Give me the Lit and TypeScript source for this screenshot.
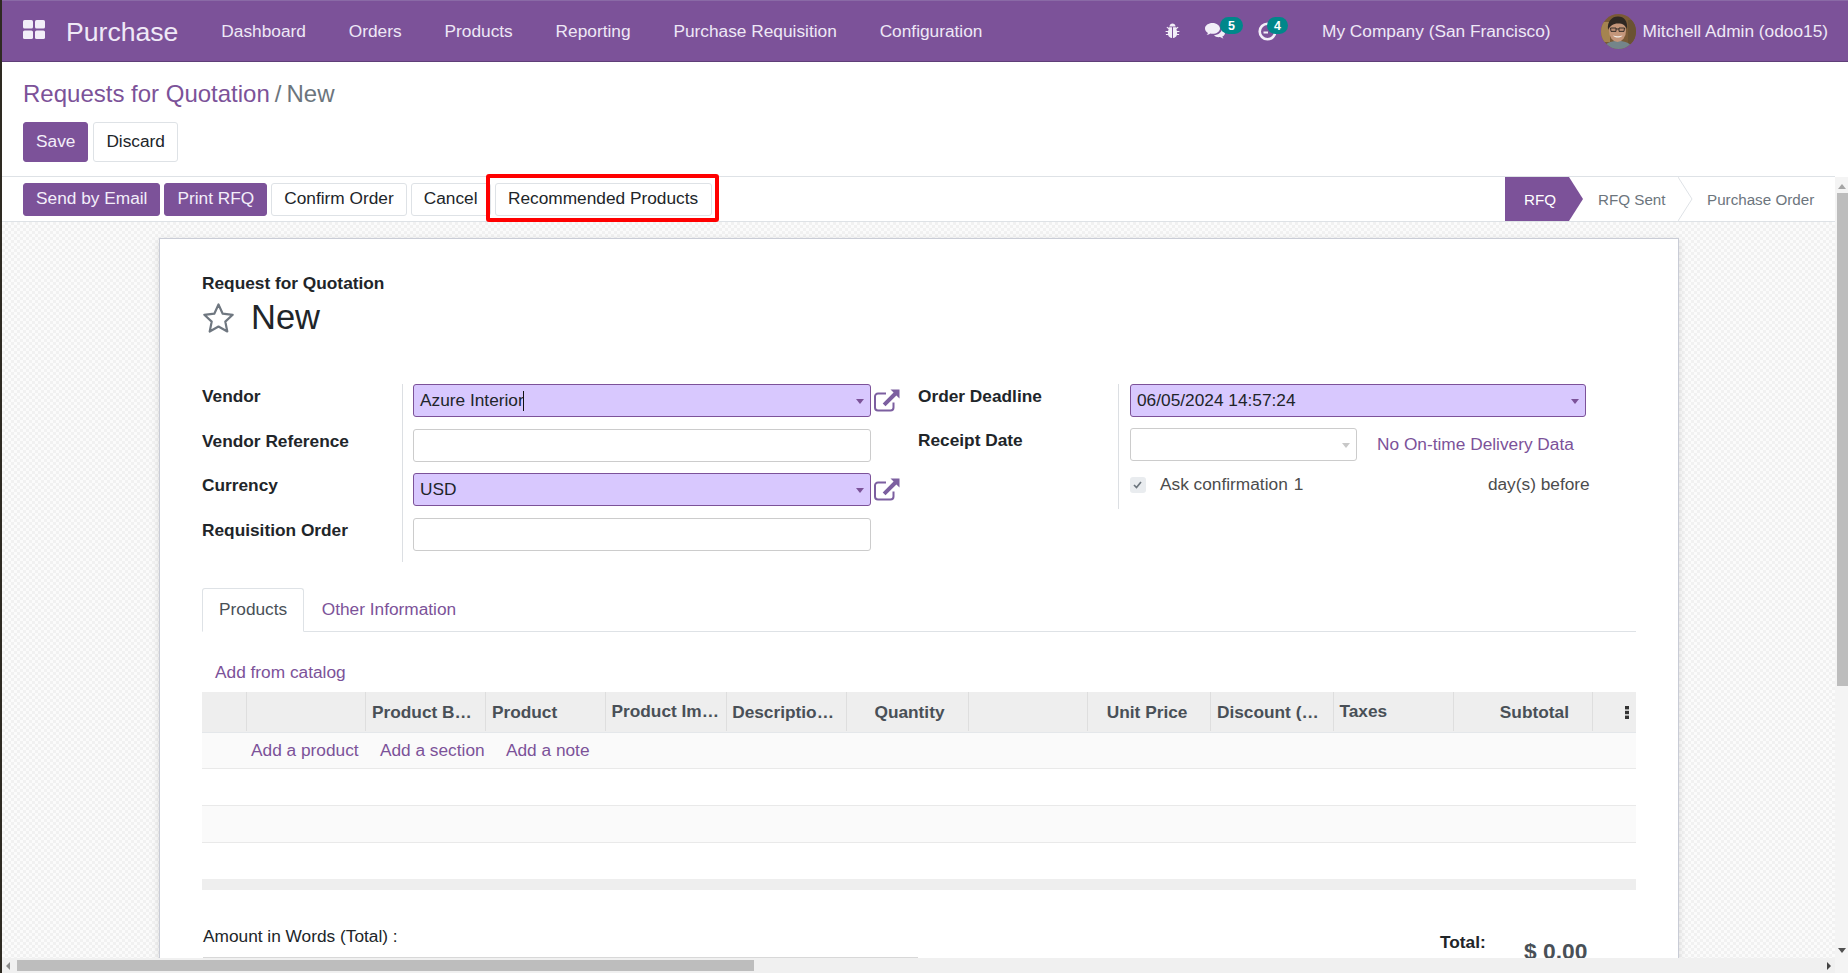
import { LitElement, html, css, svg } from "lit";
import { customElement } from "lit/decorators.js";

const columns = [
  { w: 44.6, t: "" },
  { w: 119.9, t: "" },
  { w: 119.9, t: "Product B…" },
  { w: 119.6, t: "Product" },
  { w: 120.7, t: "Product Im…", hi: true },
  { w: 119.9, t: "Descriptio…" },
  { w: 122, t: "Quantity", right: true },
  { w: 119.9, t: "" },
  { w: 123, t: "Unit Price", right: true },
  { w: 122.5, t: "Discount (…" },
  { w: 120.5, t: "Taxes", hi: true },
  { w: 138.5, t: "Subtotal", right: true },
  { w: 42, t: "", dots: true },
];

const caret = (cls: string) => html`<span class="caret ${cls}"></span>`;
const extLink = svg`<svg class="ext" viewBox="0 0 26 23" width="26" height="23"><path d="M19.5 13.5v5a3 3 0 0 1-3 3H4a3 3 0 0 1-3-3V7.5a3 3 0 0 1 3-3h8" fill="none" stroke="#7c5fa0" stroke-width="2"/><path d="M16.5 0.5H25.5V9.5L22.4 6.4 11.5 17.3 8.7 14.5 19.6 3.6Z" fill="#7c5fa0"/></svg>`;

@customElement("app-root")
export class AppRoot extends LitElement {
  static styles = css`
    :host {
      display: flex;
      flex-direction: column;
      width: 1848px;
      height: 973px;
      overflow: hidden;
      box-sizing: border-box;
      border-left: 2px solid #2e2a22;
      background: #fff;
      font-family: "Liberation Sans", Arial, sans-serif;
      font-size: 17.3px;
      color: #212529;
    }
    * { box-sizing: border-box; }
    a { color: #7c5299; text-decoration: none; }

    .nav {
      flex: none;
      height: 62px;
      background: #7c5299;
      border-top: 1px solid #8a6aa6;
      border-bottom: 1px solid #5f3f78;
      display: flex;
      align-items: center;
      color: #eee8f6;
      padding: 0 20px 0 21px;
    }
    .apps { flex: none; display: block; margin: 0 21px 3px 0; }
    .brand { font-size: 26.6px; margin-right: 43px; color: #efe9f7; padding-top: 2px; }
    .menu { display: flex; gap: 42.9px; }
    .spacer { flex: 1; }
    .sys { display: flex; align-items: center; }
    .ico { position: relative; display: block; }
    .bug { margin-right: 25px; }
    .chat { margin-right: 32px; }
    .clock { margin-right: 45px; }
    .badge {
      position: absolute;
      top: -5px;
      left: 15px;
      width: 23px;
      height: 17px;
      border-radius: 9px;
      background: #00878a;
      color: #fff;
      font-size: 12.5px;
      font-weight: 700;
      display: flex;
      align-items: center;
      justify-content: center;
    }
    .clock .badge { left: 9px; width: 21px; top: -4.5px; }
    .company { margin-right: 50px; }
    .avatar { display: block; margin-right: 7px; }

    .panel {
      flex: none;
      height: 114px;
      padding: 0 21px;
      display: flex;
      flex-direction: column;
    }
    .crumbs { height: 60px; display: flex; align-items: center; font-size: 24px; gap: 5px; padding-top: 4px; }
    .crumbs .sep, .crumbs .cur { color: #6c757d; }
    .btns { display: flex; gap: 5px; }
    .btn {
      display: inline-flex;
      align-items: center;
      height: 40px;
      padding: 0 12px 1px;
      border: 1px solid #dee2e6;
      border-radius: 3px;
      background: #fff;
      color: #212529;
      white-space: nowrap;
    }
    .btn.pri { background: #7c5299; border-color: #7c5299; color: #f3eef9; }
    .btn.s { height: 33px; }

    .work { flex: 1; min-height: 0; display: flex; }
    .left { flex: 1; min-width: 0; display: flex; flex-direction: column; }
    .status {
      flex: none;
      height: 46px;
      border-top: 1px solid #dee2e6;
      border-bottom: 1px solid #dee2e6;
      display: flex;
      align-items: center;
      padding-left: 21px;
      gap: 4px;
      background: #fff;
    }
    .status .spacer { flex: 1; }
    .reco { position: relative; }
    .reco .btn { width: 217px; justify-content: center; }
    .mark {
      position: absolute;
      left: -9px;
      right: -7px;
      top: -9px;
      bottom: -6px;
      border: 4.5px solid #ff0000;
      border-radius: 3px;
      pointer-events: none;
    }
    .pipe { display: flex; align-self: stretch; height: 44px; align-items: stretch; }
    .stage {
      display: flex;
      align-items: center;
      position: relative;
      font-size: 15.2px;
      color: #6c757d;
    }
    .stage.on { background: #7c5299; color: #fff; width: 64px; justify-content: flex-start; padding-left: 19px; }
    .stage.a { width: 109px; padding-left: 14px; }
    .stage.b { width: 142px; padding-left: 14px; }
    .chev { flex: none; display: block; }

    .sheet {
      flex: 1;
      min-height: 0;
      overflow: hidden;
      background-color: #f6f6f6;
      background-image: repeating-conic-gradient(#f1f1f1 0 25%, #fbfbfb 0 50%);
      background-size: 6px 6px;
      padding: 16px 156.5px 0 157px;
    }
    .card {
      background: #fff;
      border: 1px solid #c9ccd6;
      box-shadow: 0 2px 8px rgba(0, 0, 0, 0.12);
      padding: 32px 42px 0 42px;
      height: 900px;
    }
    .sub { font-weight: 700; line-height: 24px; }
    .title { display: flex; align-items: center; height: 38px; font-size: 34.5px; gap: 16px; margin-top: 3.5px; }
    .star { display: block; }

    .groups { display: grid; grid-template-columns: 716px 1fr; margin-top: 47.5px; align-items: start; }
    .group { display: grid; }
    .g1 { grid-template-columns: 200px 1fr; }
    .g2 { grid-template-columns: 199.5px 1fr; }
    .labels { display: flex; flex-direction: column; font-weight: 700; }
    .labels > div { height: 33.3px; line-height: 24px; margin-bottom: 11.3px; }
    .g2 .labels > div { margin-bottom: 10.5px; }
    .fields {
      border-left: 1px solid #dcdfe3;
      padding: 0 0 10px 10px;
      display: flex;
      flex-direction: column;
      gap: 11.3px;
    }
    .g2 .fields { padding-left: 11.5px; padding-bottom: 11px; gap: 10.5px; }
    .fr { display: flex; align-items: center; gap: 2.5px; height: 33.3px; }
    .ext { display: block; flex: none; }
    .inp {
      width: 458px;
      height: 33.3px;
      border: 1px solid #ccc;
      border-radius: 3px;
      background: #fff;
      padding: 0 6px;
      display: flex;
      align-items: center;
      position: relative;
    }
    .inp.req { background: #d8c8fe; border-color: #7c5299; }
    .inp.w2 { width: 456px; }
    .inp.w3 { width: 226.5px; }
    .cursor { display: inline-block; width: 1px; height: 20px; background: #111; margin-left: -1px; }
    .caret {
      position: absolute;
      right: 6px;
      top: 14px;
      width: 0;
      height: 0;
      border-left: 4.5px solid transparent;
      border-right: 4.5px solid transparent;
      border-top: 5px solid #7c5299;
    }
    .caret.off { border-top-color: #c8c8c8; }
    .rd { gap: 20.5px; }
    .late { white-space: nowrap; }
    .ask { color: #4c4c4c; justify-content: flex-start; gap: 0; height: 26px; margin-top: 0; }
    .cb {
      width: 15.5px;
      height: 16px;
      border-radius: 3px;
      background: #e9ecef;
      display: flex;
      align-items: center;
      justify-content: center;
      margin-right: 14.5px;
      flex: none;
    }
    .ask .gap { width: 184.5px; }

    .tabs { margin-top: 26px; height: 44px; display: flex; border-bottom: 1px solid #dee2e6; }
    .tab { height: 44px; padding: 0 17.5px 2px; display: flex; align-items: center; }
    .tab.on { border: 1px solid #dee2e6; border-bottom: 1px solid #fff; border-radius: 3px 3px 0 0; color: #495057; background: #fff; padding: 0 16px 2px; }
    .catalog { height: 60px; padding: 28px 0 0 13px; line-height: 24px; display: block; }
    .thead { display: flex; height: 41px; background: #eee; border-bottom: 1.5px solid #e4e7ea; font-weight: 700; color: #495057; }
    .th {
      flex: none;
      height: 39px;
      border-right: 1px solid #dedede;
      display: flex;
      align-items: center;
      padding: 1px 5px 0 5.5px;
      white-space: nowrap;
    }
    .th.right { justify-content: flex-end; padding-right: 23px; }
    .th.hi { padding-top: 0; padding-bottom: 1px; }
    .th.last { border-right: none; justify-content: flex-end; padding-right: 6px; }
    .row { height: 36.7px; border-bottom: 1.5px solid #e9e9e9; }
    .row.odd { background: #fafafa; }
    .adds { display: flex; align-items: center; gap: 21.3px; padding-left: 49px; height: 36px; }
    .tfoot { height: 11px; background: #eee; }
    .bottom { display: flex; margin-top: 32px; }
    .words { width: 715px; margin-left: 1px; border-bottom: 1.5px solid #d8d8d8; height: 36px; line-height: 28px; }
    .totals { margin-left: 522px; font-weight: 700; display: flex; }
    .totals .t { width: 84px; padding-top: 8px; line-height: 24px; }
    .totals .v { font-size: 22.8px; color: #495057; padding-top: 16px; line-height: 26px; }

    .hbar {
      flex: none;
      height: 15px;
      background: #f0f0f0;
      display: flex;
      align-items: center;
      padding-left: 4px;
    }
    .hbar .thumb { width: 737px; height: 11px; background: #bdbdbd; margin-left: 7px; }
    .hbar .spacer { flex: 1; }
    .arrow { width: 0; height: 0; border-top: 4px solid transparent; border-bottom: 4px solid transparent; }
    .arrow.l { border-right: 4px solid #8a8a8a; }
    .arrow.r { border-left: 4px solid #444; margin-right: 4px; }
    .vbar { flex: none; width: 13px; background: #f4f4f4; display: flex; flex-direction: column; align-items: flex-end; padding-top: 7px; margin-top: 1px; }
    .vbar .up { width: 0; height: 0; border-left: 4px solid transparent; border-right: 4px solid transparent; border-bottom: 5px solid #a5a5a5; margin: 0 2.5px 4px 0; }
    .vbar .vthumb { width: 11px; height: 493px; background: #bdbdbd; }
    .vbar .dn { width: 0; height: 0; border-left: 4px solid transparent; border-right: 4px solid transparent; border-top: 5px solid #505050; margin: auto 2.5px 20px 0; }
  `;

  render() {
    return html`
      <div class="nav">
        <svg class="apps" width="22" height="19" viewBox="0 0 22 19" fill="#f2eef8">
          <rect x="0" y="0" width="10" height="8.500" rx="1.600"/><rect x="12" y="0" width="10" height="8.500" rx="1.600"/>
          <rect x="0" y="10.500" width="10" height="8.500" rx="1.600"/><rect x="12" y="10.500" width="10" height="8.500" rx="1.600"/>
        </svg>
        <span class="brand">Purchase</span>
        <div class="menu">
          ${["Dashboard", "Orders", "Products", "Reporting", "Purchase Requisition", "Configuration"].map((m) => html`<span>${m}</span>`)}
        </div>
        <div class="spacer"></div>
        <div class="sys">
          <span class="ico bug">
            <svg width="15" height="16" viewBox="0 0 15 16" style="display:block" fill="#f2eef8">
              <path d="M4.4 3.4C4.6 1.5 6 .5 7.5 .5s2.900 1 3.100 2.900Z"/>
              <path d="M3.600 4.300h3.400V15c-2-.2-3.400-1.300-3.900-3H.9v-1.100h2c-.1-.6-.1-1.200 0-1.900H.6V7.900h2.500l.5-1.600L1.500 4.600l.7-.8L3.900 5.100Z"/>
              <path d="M11.400 4.300H8V15c2-.2 3.400-1.300 3.900-3h2.200v-1.100h-2c.1-.6.1-1.200 0-1.900h2.300V7.900h-2.500l-.5-1.600 2.100-1.700-.7-.8-1.700 1.300Z"/>
            </svg>
          </span>
          <span class="ico chat">
            <svg width="21" height="18" viewBox="0 0 21 18" style="display:block" fill="#f2eef8">
              <path d="M7.500 1C3.400 1 0 3.400 0 6.500c0 1.800 1.100 3.400 2.900 4.400-.2.800-.7 1.500-1.400 2.100 1.500-.1 2.900-.6 3.900-1.400.7.100 1.400.2 2.100.2 4.100 0 7.500-2.400 7.500-5.300S11.600 1 7.500 1Z"/>
              <path d="M17 6.500c.1 3.500-3.500 6.500-8 6.700 1 1.200 2.800 2 4.700 2 .5 0 1 0 1.500-.1.800.7 2 1.200 3.300 1.300-.6-.5-1-1.100-1.200-1.800 1.700-.8 2.700-2.100 2.700-3.600 0-1.900-1.200-3.500-3-4.500Z"/>
            </svg>
            <span class="badge">5</span>
          </span>
          <span class="ico clock">
            <svg width="19" height="19" viewBox="0 0 19 19" style="display:block" fill="none" stroke="#f2eef8">
              <circle cx="9.500" cy="9.500" r="7.800" stroke-width="2.600"/>
              <path d="M10 10.500H5.500" stroke-width="2"/>
            </svg>
            <span class="badge">4</span>
          </span>
          <span class="company">My Company (San Francisco)</span>
          <svg class="avatar" width="35" height="35" viewBox="0 0 35 35">
            <defs><clipPath id="av"><circle cx="17.500" cy="17.500" r="17.500"/></clipPath></defs>
            <g clip-path="url(#av)">
              <rect width="35" height="35" fill="#7a5a35"/>
              <rect x="0" y="8" width="9" height="20" fill="#a58450"/>
              <rect x="27" y="6" width="8" height="24" fill="#6a5232"/>
              <path d="M3 35c1-6 6-8 14-8s12 2 15 8Z" fill="#74858a"/>
              <ellipse cx="16.500" cy="17" rx="8.500" ry="11" fill="#c4967a"/>
              <path d="M7 16C6 7 11 2.500 17 2.500S27 7 26 15c-1.500-3.500-4-5.500-9-5.500S9 12 7 16Z" fill="#2f2822"/>
              <path d="M9.500 14h5.500v3.400H10Zm8.500 0h5.500L23 17.400h-5Z" fill="#b98c72" stroke="#2b2622" stroke-width="0.900"/>
              <path d="M15 15h3" stroke="#2b2622" stroke-width="0.900"/>
              <path d="M12 21.500c2 2.800 7.500 2.800 9.500 0-3 .9-6.500.9-9.500 0Z" fill="#f2ebe4"/>
            </g>
          </svg>
          <span>Mitchell Admin (odoo15)</span>
        </div>
      </div>

      <div class="panel">
        <div class="crumbs"><a href="#">Requests for Quotation</a><span class="sep">/</span><span class="cur">New</span></div>
        <div class="btns"><span class="btn pri">Save</span><span class="btn">Discard</span></div>
      </div>

      <div class="work">
        <div class="left">
          <div class="status">
            <span class="btn s pri">Send by Email</span>
            <span class="btn s pri">Print RFQ</span>
            <span class="btn s">Confirm Order</span>
            <span class="btn s">Cancel</span>
            <span class="reco"><span class="btn s">Recommended Products</span><span class="mark"></span></span>
            <span class="spacer"></span>
            <div class="pipe">
              <span class="stage on">RFQ</span>
              <svg class="chev" width="15" height="44" viewBox="0 0 15 44"><path d="M0 0L14 22 0 44Z" fill="#7c5299"/></svg>
              <span class="stage a">RFQ Sent</span>
              <svg class="chev" width="15" height="44" viewBox="0 0 15 44" style="margin-left:-15px"><path d="M0 0L14 22 0 44" fill="none" stroke="#dee2e6"/></svg>
              <span class="stage b">Purchase Order</span>
            </div>
          </div>
          <div class="sheet">
            <div class="card">
              <div class="sub">Request for Quotation</div>
              <div class="title">
                <svg class="star" width="33" height="32" viewBox="0 0 33 32"><path d="M16.500 2.500l4.200 9.200 10 1.100-7.400 6.800 2 9.900-8.800-5-8.800 5 2-9.900-7.400-6.800 10-1.100Z" fill="none" stroke="#6f7780" stroke-width="2.200" stroke-linejoin="round"/></svg>
                <span>New</span>
              </div>

              <div class="groups">
                <div class="group g1">
                  <div class="labels">
                    <div>Vendor</div><div>Vendor Reference</div><div>Currency</div><div>Requisition Order</div>
                  </div>
                  <div class="fields">
                    <div class="fr"><div class="inp req">Azure Interior<span class="cursor"></span>${caret("")}</div>${extLink}</div>
                    <div class="fr"><div class="inp"></div></div>
                    <div class="fr"><div class="inp req">USD${caret("")}</div>${extLink}</div>
                    <div class="fr"><div class="inp"></div></div>
                  </div>
                </div>
                <div class="group g2">
                  <div class="labels">
                    <div>Order Deadline</div><div>Receipt Date</div>
                  </div>
                  <div class="fields">
                    <div class="fr"><div class="inp req w2">06/05/2024 14:57:24${caret("")}</div></div>
                    <div class="fr rd"><div class="inp w3">${caret("off")}</div><a class="late" href="#">No On-time Delivery Data</a></div>
                    <div class="fr ask">
                      <span class="cb"><svg width="9" height="8" viewBox="0 0 9 8"><path d="M1 4l2.500 2.500L8 1" fill="none" stroke="#6c757d" stroke-width="1.700"/></svg></span>
                      <span>Ask confirmation</span><span style="margin-left:6px">1</span><span class="gap"></span><span>day(s) before</span>
                    </div>
                  </div>
                </div>
              </div>

              <div class="tabs">
                <span class="tab on">Products</span>
                <a class="tab" href="#">Other Information</a>
              </div>
              <a class="catalog" href="#">Add from catalog</a>
              <div class="thead">
                ${columns.map(
                  (c, i) => html`<div
                    class="th ${c.right ? "right" : ""} ${c.hi ? "hi" : ""} ${i === columns.length - 1 ? "last" : ""}"
                    style="width:${c.w}px"
                  >${c.dots
                    ? html`<svg width="4" height="13" viewBox="0 0 4 13" fill="#333"><rect width="4" height="3.400" y="0"/><rect width="4" height="3.400" y="4.800"/><rect width="4" height="3.400" y="9.600"/></svg>`
                    : c.t}</div>`
                )}
              </div>
              <div class="row odd adds"><a href="#">Add a product</a><a href="#">Add a section</a><a href="#">Add a note</a></div>
              <div class="row"></div>
              <div class="row odd"></div>
              <div class="row" style="border-bottom:none"></div>
              <div class="tfoot"></div>
              <div class="bottom">
                <div class="words">Amount in Words (Total) :</div>
                <div class="totals"><span class="t">Total:</span><span class="v">$ 0.00</span></div>
              </div>
            </div>
          </div>
          <div class="hbar"><span class="arrow l"></span><span class="thumb"></span><span class="spacer"></span><span class="arrow r"></span></div>
        </div>
        <div class="vbar"><span class="up"></span><span class="vthumb"></span><span class="dn"></span></div>
      </div>
    `;
  }
}
